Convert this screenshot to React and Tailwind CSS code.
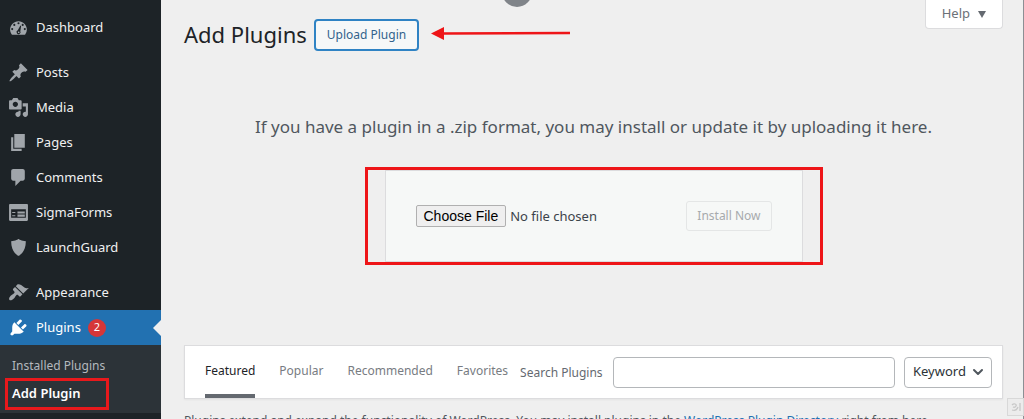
import { ChevronDown } from "lucide-react";

const icons = {
  dashboard:
    "M3.76 17h12.48A7.98 7.98 0 0 0 18 12c0-4.41-3.58-8-8-8s-8 3.59-8 8c0 1.9.66 3.64 1.76 5zM10 5a1 1 0 1 1 0 2 1 1 0 0 1 0-2zM6 6.5a1 1 0 1 1 0 2 1 1 0 0 1 0-2zM14 6.5a1 1 0 1 1 0 2 1 1 0 0 1 0-2zM4 10.5a1 1 0 1 1 0 2 1 1 0 0 1 0-2zM16 10.5a1 1 0 1 1 0 2 1 1 0 0 1 0-2zM11.8 8.2l.7.3-.8 5a1.9 1.9 0 1 1-2.4-.8zM10.2 13.7a.8.8 0 1 0 0 1.6.8.8 0 0 0 0-1.6z",
  posts:
    "M10.44 3.02l1.82-1.82 6.36 6.35-1.83 1.82c-1.05-.68-2.48-.57-3.41.36l-.75.75c-.92.93-1.04 2.35-.35 3.41l-1.83 1.82-2.41-2.41-2.8 2.79c-.42.42-3.38 2.71-3.8 2.29s1.86-3.39 2.28-3.81l2.79-2.79L4.1 9.36l1.83-1.82c1.05.69 2.48.57 3.4-.36l.75-.75c.93-.92 1.05-2.35.36-3.41z",
  media:
    "M13 11V4c0-.55-.45-1-1-1h-1.67L9 1H5L3.67 3H2c-.55 0-1 .45-1 1v7c0 .55.45 1 1 1h10c.55 0 1-.45 1-1zM7 4.5c1.38 0 2.5 1.12 2.5 2.5S8.38 9.5 7 9.5 4.5 8.38 4.5 7 5.62 4.5 7 4.5zM14 6h5v10.5c0 1.38-1.12 2.5-2.5 2.5S14 17.88 14 16.5s1.12-2.5 2.5-2.5c.17 0 .34.02.5.05V9h-3V6zm-4 8.05V13h2v3.5c0 1.38-1.12 2.5-2.5 2.5S7 17.88 7 16.5 8.12 14 9.5 14c.17 0 .34.02.5.05z",
  pages: "M6 15V2h10v13H6zm-1 1h8v2H3V5h2v11z",
  comments:
    "M5 2h9c1.1 0 2 .9 2 2v7c0 1.1-.9 2-2 2h-2l-5 5v-5H5c-1.1 0-2-.9-2-2V4c0-1.1.9-2 2-2z",
  forms:
    "M2 2h16c.55 0 1 .45 1 1v14c0 .55-.45 1-1 1H2c-.55 0-1-.45-1-1V3c0-.55.45-1 1-1zM3 7h14v1H3zM3 8h5v7H3zM8 8h9v7H8zM9 9v2h7V9zM9 12v2h7v-2zM4 9.5v1h3v-1zM4 12.5v1h3v-1z",
  guard: "M10 2s3 2 7 2c0 11-7 14-7 14S3 15 3 4c4 0 7-2 7-2z",
  appearance:
    "M14.48 11.06L7.41 3.99l1.5-1.5c.5-.56 2.3-.47 3.51.32 1.21.8 1.43 1.28 2.91 2.1 1.18.64 2.45 1.26 4.45.85zm-.71.71L6.7 4.7 4.93 6.47c-.39.39-.39 1.02 0 1.41l1.06 1.06c.39.39.39 1.03 0 1.42-.6.6-1.43 1.11-2.21 1.69-.35.26-.7.53-1.01.84C1.43 14.23.4 16.08 1.4 17.07c.99 1 2.84-.03 4.18-1.36.31-.31.58-.66.85-1.02.57-.78 1.08-1.61 1.69-2.21.39-.39 1.02-.39 1.41 0l1.06 1.06c.39.39 1.02.39 1.41 0z",
  plugins:
    "M13.11 4.36L9.87 7.6 8 5.73l3.24-3.24c.35-.34 1.05-.2 1.56.32.52.51.66 1.21.31 1.55zm-8 1.77l.91-1.12 9.01 9.01-1.19.84c-.71.71-2.63 1.16-3.82 1.16H6.14L4.9 17.26c-.59.59-1.54.59-2.12 0-.59-.58-.59-1.53 0-2.12l1.24-1.24v-3.88c0-1.13.4-3.19 1.09-3.89zm7.26 3.97l3.24-3.24c.34-.35 1.04-.21 1.55.31.52.51.66 1.21.31 1.55l-3.24 3.25z",
};

const menuGroups = [
  [{ icon: "dashboard", label: "Dashboard" }],
  [
    { icon: "posts", label: "Posts" },
    { icon: "media", label: "Media" },
    { icon: "pages", label: "Pages" },
    { icon: "comments", label: "Comments" },
    { icon: "forms", label: "SigmaForms" },
    { icon: "guard", label: "LaunchGuard" },
  ],
  [
    { icon: "appearance", label: "Appearance" },
    { icon: "plugins", label: "Plugins", count: 2, active: true },
  ],
];

const tabs = ["Featured", "Popular", "Recommended", "Favorites"];

function MenuIcon({ name, active }) {
  return (
    <svg
      viewBox="0 0 20 20"
      fillRule="evenodd"
      aria-hidden="true"
      className={`size-[21px] shrink-0 ${active ? "fill-white" : "fill-[#a0a5aa]"}`}
    >
      <path d={icons[name]} />
    </svg>
  );
}

function MenuItem({ icon, label, count, active }) {
  return (
    <li>
      <a
        href="#"
        className={`relative flex h-[35px] items-center gap-[7px] pl-2 text-[13px] ${
          active ? "bg-[#2271b1] text-white" : "text-[#f0f0f1]"
        }`}
      >
        <MenuIcon name={icon} active={active} />
        {label}
        {count && (
          <span className="flex size-[18px] items-center justify-center rounded-full bg-[#d63638] text-[11px] text-white">
            {count}
          </span>
        )}
        {active && (
          <span className="absolute right-0 border-y-8 border-r-8 border-y-transparent border-r-[#efefef]" />
        )}
      </a>
    </li>
  );
}

function Sidebar() {
  return (
    <nav className="w-[161px] shrink-0 bg-[#1d2327] pt-[10px]">
      <div className="flex flex-col gap-[10px]">
        {menuGroups.map((group) => (
          <ul key={group[0].label}>
            {group.map((item) => (
              <MenuItem key={item.label} {...item} />
            ))}
          </ul>
        ))}
      </div>
      <ul className="bg-[#2c3338] px-[5px] pt-2 pb-[3px]">
        <li>
          <a href="#" className="flex h-[25px] items-center pl-[7px] text-[12px] text-[#b4b9be]">
            Installed Plugins
          </a>
        </li>
        <li>
          <a
            href="#"
            className="flex h-8 w-[104px] items-center border-3 border-[#e8191c] pl-1 text-[13px] font-semibold text-white"
          >
            Add Plugin
          </a>
        </li>
      </ul>
    </nav>
  );
}

function UploadForm() {
  return (
    <div className="mx-auto w-full max-w-[458px] border-3 border-[#ee1518] px-[17px]">
      <form className="flex h-[92px] items-center justify-between border border-[#dcdcde] bg-[#f6f8f7] px-[30px]">
        <input
          type="file"
          aria-label="Plugin zip file"
          className="w-[220px] text-[13px] text-[#3c434a] file:mr-1 file:h-[22px] file:rounded-[2px] file:border file:border-solid file:border-[#b0b0b0] file:bg-[#efefef] file:px-[7px] file:font-['Liberation_Sans',sans-serif] file:text-[14px] file:leading-none file:text-black"
        />
        <button
          type="submit"
          disabled
          className="h-[30px] rounded-[3px] border border-[#e4e6e6] px-[10px] text-[12px] text-[#a7aaad]"
        >
          Install Now
        </button>
      </form>
    </div>
  );
}

function FilterBar() {
  return (
    <div className="flex h-[54px] items-center border border-[#dcdcde] bg-white pr-[10px] pl-5 text-[12px] shadow-xs">
      <div className="flex h-full gap-6">
        {tabs.map((tab, i) => (
          <a
            key={tab}
            href="#"
            className={`flex h-full items-center border-b-4 pt-[2px] ${
              i === 0 ? "border-[#646970] text-[#1d2327]" : "border-transparent text-[#787c82]"
            }`}
          >
            {tab}
          </a>
        ))}
      </div>
      <label htmlFor="search" className="ml-3 pt-[2px] whitespace-nowrap text-[#646970]">
        Search Plugins
      </label>
      <input
        id="search"
        type="search"
        className="ml-[10px] h-[31px] min-w-0 flex-1 rounded-[4px] border border-[#b4b7ba] bg-white px-2"
      />
      <div className="relative ml-[9px] flex items-center">
        <select
          aria-label="Search by"
          className="h-[31px] w-[88px] appearance-none rounded-[4px] border border-[#b4b7ba] bg-white pl-2 text-[13px] text-[#2c3338]"
        >
          <option>Keyword</option>
          <option>Author</option>
          <option>Tag</option>
        </select>
        <ChevronDown
          size={16}
          strokeWidth={3}
          className="pointer-events-none absolute right-[6px] text-[#50575e]"
        />
      </div>
    </div>
  );
}

export default function App() {
  return (
    <div className="relative flex h-screen overflow-hidden bg-[#efefef] font-['Noto_Sans','Open_Sans',sans-serif] text-[#3c434a]">
      <Sidebar />
      <main className="min-w-0 flex-1 border-r border-[#8c8f94] pr-5 pl-[23px]">
        <header className="flex items-start">
          <h1 className="mt-[18px] text-[22px] leading-8 text-[#1d2327]">Add Plugins</h1>
          <button
            type="button"
            className="mt-[19px] ml-[7px] h-8 rounded-[4px] border-2 border-[#2f83c4] bg-[#f6f8f8] px-[11px] text-[12px] text-[#33638c]"
          >
            Upload Plugin
          </button>
          <svg viewBox="0 0 140 14" className="mt-[27px] ml-3 h-[14px] w-[140px]" aria-hidden="true">
            <path d="M12 6.5L139 6" stroke="#ee1518" strokeWidth="2.5" />
            <path d="M0 6.5L13 0v13z" fill="#ee1518" />
          </svg>
          <button
            type="button"
            className="ml-auto flex h-[29px] items-center gap-2 rounded-b-[4px] border border-t-0 border-[#dcdcde] bg-white px-4 text-[13px] text-[#6c7178]"
          >
            Help
            <svg viewBox="0 0 8 7" className="h-[7px] w-2 fill-[#646970]" aria-hidden="true">
              <path d="M0 0h8L4 7z" />
            </svg>
          </button>
        </header>
        <p className="mt-[62px] text-center text-[17px] leading-7 whitespace-nowrap text-[#50575e]">
          If you have a plugin in a .zip format, you may install or update it by uploading it here.
        </p>
        <div className="mt-[26px] mb-20">
          <UploadForm />
        </div>
        <FilterBar />
        <p className="mt-3 text-[12px] leading-5 text-[#50575e]">
          Plugins extend and expand the functionality of WordPress. You may install plugins in the{" "}
          <a href="#" className="text-[#2271b1]">
            WordPress Plugin Directory
          </a>{" "}
          right from here,
        </p>
      </main>
      <span className="absolute -top-[23px] left-[502px] size-[30px] rounded-full bg-[#808489]" />
      <span className="absolute right-0 bottom-[3px] flex h-[18px] w-[17px] items-center justify-center border border-[#d8d8d8] bg-[#ececec]">
        <svg viewBox="0 0 10 10" className="size-[10px] fill-none stroke-[#c8c8c8]" aria-hidden="true">
          <path d="M1 3c2-2 5-1 4 1S2 5 2 5M1 8c3 1 5 0 6-3M9 1v8" strokeWidth="1.3" />
        </svg>
      </span>
    </div>
  );
}
